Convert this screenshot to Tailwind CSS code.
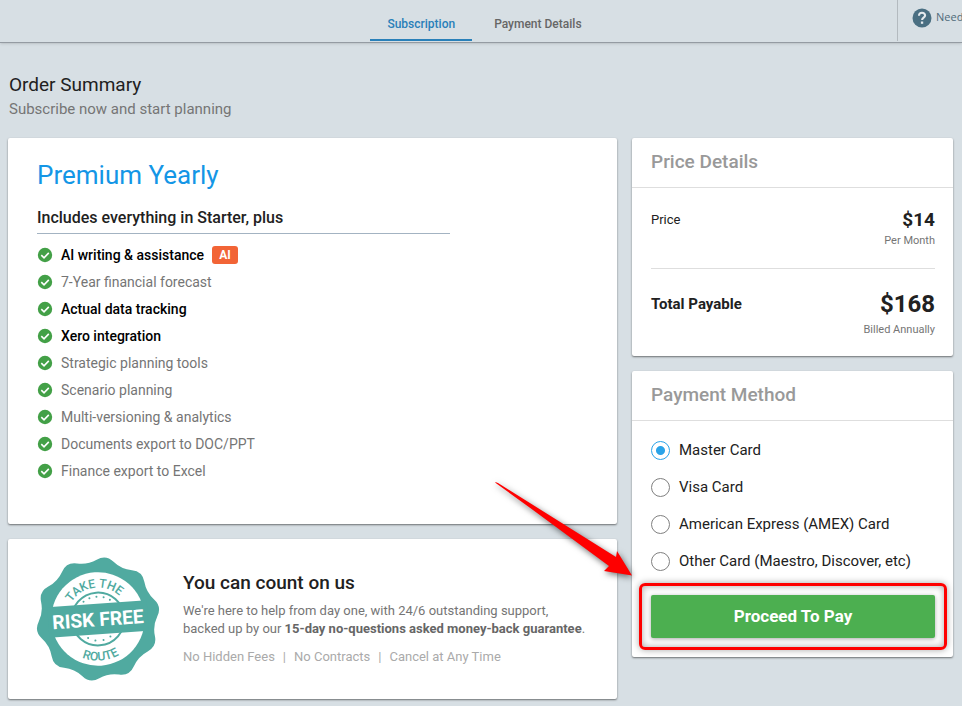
<!DOCTYPE html>
<html lang="en">
<head>
  <meta charset="UTF-8" />
  <meta name="viewport" content="width=device-width, initial-scale=1" />
  <title>Subscription - Order Summary</title>
  <script src="https://cdn.jsdelivr.net/npm/@tailwindcss/browser@4"></script>
</head>
<body class="min-h-screen overflow-x-hidden bg-[#d7dfe4] font-[Roboto,sans-serif] text-[#212121]">

  <header class="flex h-[43px] border-b border-[#949ba2] shadow-sm">
    <nav class="flex flex-1 justify-center gap-[5px] pl-[72px] text-xs font-medium">
      <a href="#subscription" class="flex h-[41px] items-center border-b-2 border-[#2980b9] px-[17px] pt-2 text-[#2980b9]">Subscription</a>
      <a href="#payment" class="flex h-[41px] items-center border-b-2 border-transparent px-[17px] pt-2 text-[#666]">Payment Details</a>
    </nav>
    <a href="#help" class="flex h-[41px] w-[65px] items-center gap-1 border-l border-[#b3babf] pb-[6px] pl-[14px] font-['Open_Sans',sans-serif] text-[11px] text-[#4f6b7a]">
      <svg class="size-5 shrink-0" viewBox="0 0 20 20" fill="none">
        <circle cx="10" cy="10" r="9.5" fill="#4a6f82" />
        <path d="M7 7.8C7 5.900 8.2 4.800 10 4.800s3.1 1.1 3.1 2.700c0 2.2-3 2.2-3 4.400" stroke="#e4eaee" stroke-width="2.1" />
        <rect x="8.900" y="13.500" width="2.3" height="2.3" fill="#e4eaee" />
      </svg>
      Need
    </a>
  </header>

  <main class="pt-[30px] pr-[9px] pb-[7px] pl-2">
    <h1 class="pl-px text-[19px] leading-6 text-[#212121]">Order Summary</h1>
    <p class="mt-[2px] pl-px text-[15px] leading-5 text-[#757575]">Subscribe now and start planning</p>

    <div class="mt-[19px] grid grid-cols-[minmax(0,1fr)_321px] items-start gap-[15px]">
      <div class="flex flex-col gap-[15px]">

        <!-- Plan -->
        <section class="rounded-xs bg-white px-[29px] pt-5 pb-[40px] shadow-[0_1px_2px_rgba(0,0,0,0.5)]">
          <h2 class="text-[26px] leading-[34px] text-[#1496e6]">Premium Yearly</h2>
          <h3 class="mt-[13px] w-3/4 border-b border-[#a3b3c2] pb-[3px] text-base leading-[25px] font-medium">Includes everything in Starter, plus</h3>
          <ul id="features" class="mt-[7px] text-sm text-[#757575]">
            <li class="flex h-[27px] items-center gap-2 font-medium text-black">
              <svg class="size-4 shrink-0" viewBox="0 0 16 16" fill="none"><circle cx="8" cy="8" r="7.2" fill="#43a047" /><path d="M4.3 8.2 7 10.8l4.8-4.9" stroke="#fff" stroke-width="1.6" /></svg>
              AI writing &amp; assistance
              <span class="h-[18px] w-[26px] rounded-[3px] bg-[#f26436] text-center text-xs leading-[19px] font-bold text-white">AI</span>
            </li>
            <li class="flex h-[27px] items-center gap-2">
              <svg class="size-4 shrink-0" viewBox="0 0 16 16" fill="none"><circle cx="8" cy="8" r="7.2" fill="#43a047" /><path d="M4.3 8.2 7 10.8l4.8-4.9" stroke="#fff" stroke-width="1.6" /></svg>
              7-Year financial forecast
            </li>
            <li class="flex h-[27px] items-center gap-2 font-medium text-black">
              <svg class="size-4 shrink-0" viewBox="0 0 16 16" fill="none"><circle cx="8" cy="8" r="7.2" fill="#43a047" /><path d="M4.3 8.2 7 10.8l4.8-4.9" stroke="#fff" stroke-width="1.6" /></svg>
              Actual data tracking
            </li>
            <li class="flex h-[27px] items-center gap-2 font-medium text-black">
              <svg class="size-4 shrink-0" viewBox="0 0 16 16" fill="none"><circle cx="8" cy="8" r="7.2" fill="#43a047" /><path d="M4.3 8.2 7 10.8l4.8-4.9" stroke="#fff" stroke-width="1.6" /></svg>
              Xero integration
            </li>
            <li class="flex h-[27px] items-center gap-2">
              <svg class="size-4 shrink-0" viewBox="0 0 16 16" fill="none"><circle cx="8" cy="8" r="7.2" fill="#43a047" /><path d="M4.3 8.2 7 10.8l4.8-4.9" stroke="#fff" stroke-width="1.6" /></svg>
              Strategic planning tools
            </li>
            <li class="flex h-[27px] items-center gap-2">
              <svg class="size-4 shrink-0" viewBox="0 0 16 16" fill="none"><circle cx="8" cy="8" r="7.2" fill="#43a047" /><path d="M4.3 8.2 7 10.8l4.8-4.9" stroke="#fff" stroke-width="1.6" /></svg>
              Scenario planning
            </li>
            <li class="flex h-[27px] items-center gap-2">
              <svg class="size-4 shrink-0" viewBox="0 0 16 16" fill="none"><circle cx="8" cy="8" r="7.2" fill="#43a047" /><path d="M4.3 8.2 7 10.8l4.8-4.9" stroke="#fff" stroke-width="1.6" /></svg>
              Multi-versioning &amp; analytics
            </li>
            <li class="flex h-[27px] items-center gap-2">
              <svg class="size-4 shrink-0" viewBox="0 0 16 16" fill="none"><circle cx="8" cy="8" r="7.2" fill="#43a047" /><path d="M4.3 8.2 7 10.8l4.8-4.9" stroke="#fff" stroke-width="1.6" /></svg>
              Documents export to DOC/PPT
            </li>
            <li class="flex h-[27px] items-center gap-2">
              <svg class="size-4 shrink-0" viewBox="0 0 16 16" fill="none"><circle cx="8" cy="8" r="7.2" fill="#43a047" /><path d="M4.3 8.2 7 10.8l4.8-4.9" stroke="#fff" stroke-width="1.6" /></svg>
              Finance export to Excel
            </li>
          </ul>
        </section>

        <!-- Guarantee -->
        <section class="flex items-start gap-[22px] rounded-xs bg-white py-[17px] pr-4 pl-[27px] shadow-[0_1px_2px_rgba(0,0,0,0.5)]">
          <svg class="size-[126px] shrink-0" viewBox="-62 -62 124 124" fill="none" font-family="Roboto, sans-serif" text-anchor="middle">
            <path fill="#50aaa0" d="M-1.3-58.4Q7.8-63.7 15.3-56.4Q22.9-49.1 33.4-48Q43.8-47 45.6-36.6Q47.4-26.3 55.2-19.2Q63-12.2 58.4-2.8Q53.8 6.6 56 16.8Q58.2 27.1 48.9 32Q39.6 37 35.3 46.6Q31.1 56.2 20.7 54.7Q10.3 53.2 1.3 58.4Q-7.8 63.7-15.3 56.4Q-22.9 49.1-33.4 48Q-43.8 47-45.6 36.6Q-47.4 26.3-55.2 19.2Q-63 12.2-58.4 2.8Q-53.8-6.6-56-16.8Q-58.2-27.1-48.9-32Q-39.6-37-35.3-46.6Q-31.1-56.2-20.7-54.7Q-10.3-53.2-1.3-58.4Z" />
            <g transform="rotate(-4)">
              <circle r="46" fill="#fff" />
              <circle r="26" stroke="#50aaa0" stroke-width="2" />
              <g fill="#50aaa0">
                <circle cx="-13" cy="-18" r="1" /><circle cx="-7" cy="-21" r="1" /><circle cx="0" cy="-22" r="1" /><circle cx="7" cy="-21" r="1" /><circle cx="13" cy="-18" r="1" />
                <circle cx="-11" cy="18" r="1" /><circle cx="-4" cy="21" r="1" /><circle cx="4" cy="21" r="1" /><circle cx="11" cy="18" r="1" />
              </g>
              <rect x="-49" y="-15" width="98" height="30" fill="#50aaa0" />
              <path id="arcTop" d="M-31 0A31 31 0 0 1 31 0" />
              <path id="arcBottom" d="M-41 0A41 41 0 0 0 41 0" />
              <text font-size="12" font-weight="500" fill="#50aaa0"><textPath href="#arcTop" startOffset="48%">TAKE THE</textPath></text>
              <text font-size="12" font-weight="500" fill="#50aaa0"><textPath href="#arcBottom" startOffset="50%">ROUTE</textPath></text>
              <text y="7" font-size="19" font-weight="700" fill="#fff">RISK FREE</text>
            </g>
          </svg>
          <div class="pt-[15px]">
            <h2 class="text-[19px] leading-6 font-medium">You can count on us</h2>
            <p class="mt-[7px] text-[13px] leading-[18px] text-[#757575]">We're here to help from day one, with 24/6 outstanding support,<br />backed up by our <b class="font-bold text-[#666]">15-day no-questions asked money-back guarantee</b>.</p>
            <p class="mt-[10px] flex gap-2 text-[13px] leading-[18px] text-[#aaa]"><span>No Hidden Fees</span><span>|</span><span>No Contracts</span><span>|</span><span>Cancel at Any Time</span></p>
          </div>
        </section>
      </div>

      <div class="flex flex-col gap-[15px]">

        <!-- Price -->
        <section class="rounded-xs bg-white shadow-[0_1px_2px_rgba(0,0,0,0.5)]">
          <h2 class="border-b border-[#dedede] px-[19px] pt-3 pb-[13px] text-[19px] leading-6 font-medium text-[#999]">Price Details</h2>
          <div class="mr-[18px] ml-[19px] flex justify-between border-b border-[#dedede] pt-5 pb-[19px]">
            <span class="text-[13px] leading-6">Price</span>
            <div class="text-right">
              <div class="text-[19px] leading-6 font-bold">$14</div>
              <div class="text-[11px] leading-[17px] text-[#757575]">Per Month</div>
            </div>
          </div>
          <div class="mr-[18px] ml-[19px] flex justify-between pt-[19px] pb-[17px]">
            <span class="text-[15px] leading-8 font-bold">Total Payable</span>
            <div class="text-right">
              <div class="text-2xl leading-8 font-bold">$168</div>
              <div class="text-[11px] leading-[19px] text-[#757575]">Billed Annually</div>
            </div>
          </div>
        </section>

        <!-- Payment method -->
        <section class="rounded-xs bg-white pb-[19px] shadow-[0_1px_2px_rgba(0,0,0,0.5)]">
          <h2 class="border-b border-[#dedede] px-[19px] pt-3 pb-[13px] text-[19px] leading-6 font-medium text-[#999]">Payment Method</h2>
          <form class="pt-[19px] pr-[18px] pl-[19px]">
            <div class="flex flex-col gap-[17px] text-[15px] leading-5">
              <label class="flex items-center gap-[9px]">
                <input type="radio" name="card" checked class="size-[19px] appearance-none rounded-full border border-[#808080] checked:border-[#29a3e8] checked:bg-[radial-gradient(circle,#29a3e8_4px,white_5px)]" />
                Master Card
              </label>
              <label class="flex items-center gap-[9px]">
                <input type="radio" name="card" class="size-[19px] appearance-none rounded-full border border-[#808080] checked:border-[#29a3e8] checked:bg-[radial-gradient(circle,#29a3e8_4px,white_5px)]" />
                Visa Card
              </label>
              <label class="flex items-center gap-[9px]">
                <input type="radio" name="card" class="size-[19px] appearance-none rounded-full border border-[#808080] checked:border-[#29a3e8] checked:bg-[radial-gradient(circle,#29a3e8_4px,white_5px)]" />
                American Express (AMEX) Card
              </label>
              <label class="flex items-center gap-[9px]">
                <input type="radio" name="card" class="size-[19px] appearance-none rounded-full border border-[#808080] checked:border-[#29a3e8] checked:bg-[radial-gradient(circle,#29a3e8_4px,white_5px)]" />
                Other Card (Maestro, Discover, etc)
              </label>
            </div>
            <div class="relative mt-[24px]">
              <!-- highlight box and arrow over the page -->
              <div class="pointer-events-none absolute -inset-3 rounded-md border-3 border-[#fe0000] shadow-[0_0_7px_rgba(0,0,0,0.35),inset_0_0_7px_rgba(0,0,0,0.35)]"></div>
              <svg class="pointer-events-none absolute -top-[115px] -left-[156px] h-[100px] w-[142px] overflow-visible drop-shadow-[1px_2px_3px_rgba(0,0,0,0.55)]" viewBox="0 0 142 100">
                <path fill="#fe0000" d="M0 2.500Q1 2 3 3L121 77L122 71L137 95.500L109 91L114 86L38 30Z" />
              </svg>
              <button type="submit" class="relative h-[43px] w-full rounded-xs bg-[#4caf50] text-[17px] font-bold text-white shadow-[0_1px_4px_rgba(0,0,0,0.35)]">Proceed To Pay</button>
            </div>
          </form>
        </section>
      </div>
    </div>
  </main>

</body>
</html>
